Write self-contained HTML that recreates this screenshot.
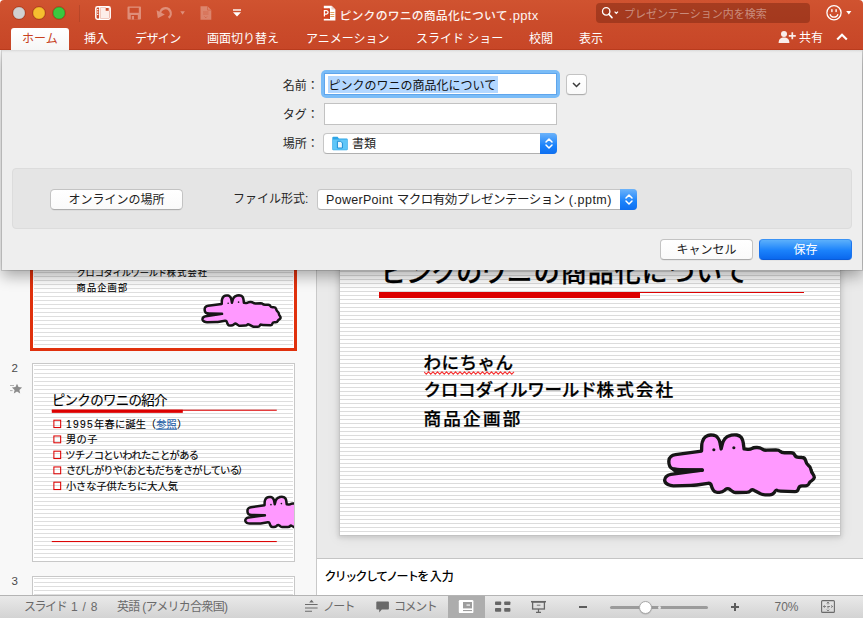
<!DOCTYPE html>
<html lang="ja">
<head>
<meta charset="utf-8">
<title>ピンクのワニの商品化について.pptx</title>
<style>
*{box-sizing:border-box;margin:0;padding:0}
html,body{width:863px;height:618px;overflow:hidden;background:#eaeaea}
body{position:relative;font-family:"Liberation Sans","Noto Sans CJK JP",sans-serif;font-size:12px;color:#222;-webkit-font-smoothing:antialiased}
.abs{position:absolute}
.t{position:absolute;white-space:nowrap;line-height:1}
/* ---------- title bar ---------- */
#titlebar{left:0;top:0;width:863px;height:50px;background:linear-gradient(#d05330 0,#cb4c2b 22px,#c74627 50px);border-radius:4px 4px 0 0;border-bottom:1px solid #b93b1d}
.tl{position:absolute;width:12px;height:12px;border-radius:50%;top:7px;outline:.5px solid rgba(130,35,10,.35)}
.tab{position:absolute;top:32.500px;color:#fff;white-space:nowrap;line-height:12px;font-size:12px}
#hometab{left:11px;top:28px;width:58px;height:22px;background:linear-gradient(#fff,#f6f6f6);border-radius:3px 3px 0 0}
/* ---------- workspace ---------- */
#leftpane{left:0;top:50px;width:316px;height:545px;background:#f8f8f8}
#divider{left:316px;top:50px;width:1px;height:545px;background:#c9c9c9}
#main{left:317px;top:50px;width:546px;height:508px;background:#eaeaea}
.stripes{background-color:#fff;background-image:repeating-linear-gradient(to bottom,transparent 0,transparent 3px,#dcdcdc 3px,#dcdcdc 4px)}
#slide{left:340px;top:160px;width:500px;height:375px;box-shadow:0 0 0 1px rgba(0,0,0,.04),0 1px 4px 2px rgba(0,0,0,.10),0 1px 12px 2px rgba(0,0,0,.07);background-position:0 0}
#notes{left:317px;top:558px;width:546px;height:37px;background:#fff;border-top:1px solid #c4c4c4}
/* ---------- status ---------- */
#status{left:0;top:595px;width:863px;height:23px;background:linear-gradient(#e9e9e9,#d3d3d3);border-top:1px solid #b4b4b4}
.st{position:absolute;white-space:nowrap;line-height:12px;font-size:12px;color:#6a6a6a;top:601px}
/* ---------- sheet ---------- */
#sheet{left:2px;top:50px;width:860px;height:220px;background:linear-gradient(#d9d9d9 0,#ebebeb 2px,#eee 3.500px);box-shadow:0 6px 14px rgba(0,0,0,.33),0 0 0 1px rgba(0,0,0,.12)}
#group{left:12px;top:168px;width:840px;height:61px;background:#e5e5e5;border:1px solid #dcdcdc;border-radius:4px}
.lbl{position:absolute;white-space:nowrap;line-height:13px;font-size:12px;color:#262626}
.field{position:absolute;background:#fff;border:1px solid #c2c2c2}
.btn{position:absolute;background:linear-gradient(#fff,#fafafa);border:1px solid #c3c3c3;border-bottom-color:#adadad;border-radius:4px;text-align:center;font-size:12px;color:#222;box-shadow:0 .5px 0 rgba(0,0,0,.08)}
.popup{position:absolute;background:#fff;border:1px solid #c6c6c6;border-bottom-color:#b0b0b0;border-radius:4px}
.step{position:absolute;background:linear-gradient(#6cb3fa,#1a82fb 60%,#0f6ff0);border-radius:0 4px 4px 0}

.sl{position:absolute;width:500px;height:375px;overflow:hidden;transform-origin:0 0;color:#000}
.sl .tt{position:absolute;white-space:nowrap;line-height:1;color:#000;font-weight:500;-webkit-text-stroke-width:.25px}
.thumb{position:absolute;width:263px;height:199px;border:1px solid #c8c8c8;overflow:hidden}
.tstripes{background-color:#fff;background-image:repeating-linear-gradient(to bottom,transparent 0,transparent 1px,#dedede 1px,#dedede 2px,transparent 2px,transparent 4px);box-shadow:inset 0 0 0 1px #fff}
.bar{position:absolute;background:#dc0000}
.bul{position:absolute;width:15.500px;height:15.500px;border:2.800px solid #dc0000}
.th .tt{margin-top:2px}
.thumb .sl .tt{font-weight:400;-webkit-text-stroke-width:.2px}
#slide svg{stroke-width:16px}
.thumb svg{stroke-width:23px}
.num{position:absolute;font-size:11.500px;line-height:11px;color:#4a4a4a;left:11.500px}
</style>
</head>
<body>

<!-- ================= workspace (behind sheet) ================= -->
<svg width="0" height="0" style="position:absolute"><defs><symbol id="croc" viewBox="0 0 863 432">
<path d="M250 240L144 238Q130 238 116 235L112 235Q98 232 94 221L94 221Q89 210 90 196L90 196Q91 182 100 175L100 175Q108 168 122 166L247 149L248 119Q249 105 256 93L256 92Q263 80 276 75L276 75Q288 70 302 73L305 73Q319 76 326 87L326 87Q334 98 336 112L341 139L347 115Q350 101 359 90L360 89Q369 78 383 75L389 73Q403 70 416 72L416 72Q430 74 438 84L438 84Q445 95 447 109L451 139L468 141Q482 142 488 137L488 137Q495 132 509 132L514 132Q528 132 536 138L536 138Q544 145 558 145L604 143Q618 143 624 150L624 150Q631 157 645 157L676 157Q690 157 694 168L694 168Q699 179 713 179L729 180Q743 180 746 194L747 196Q750 210 760 218L760 218Q771 226 772 238L772 238Q774 251 782 260L782 260Q789 269 788 277L788 277Q786 285 776 291L776 291Q765 297 762 306L762 306Q758 316 744 316L729 316Q715 316 712 330L712 330Q709 344 695 344L626 341Q612 341 609 338L609 338Q606 334 598 345L596 348Q588 359 574 359L552 359Q538 359 526 352L500 338Q488 331 482 339L482 339Q476 347 462 347L422 348Q408 348 402 346L402 346Q397 344 386 336L383 333Q372 325 361 334L358 337Q347 346 333 347L324 347Q310 348 304 338L304 338Q297 328 294 315L294 315Q291 302 277 304L224 312Q210 314 196 314L112 316Q98 316 85 310L85 309Q72 303 70 291L70 291Q69 279 78 271L78 271Q86 263 100 261L250 240Z" fill="#ff99ff" stroke="#161616" stroke-linejoin="round"/>
<path d="M250 241L140 244" stroke="#161616" stroke-width="17" stroke-linecap="round"/>
<path d="M165 236L100 236L120 256z" fill="#161616"/>
<circle cx="306" cy="143" r="7.500" fill="#161616"/><circle cx="402" cy="133" r="7.500" fill="#161616"/>
</symbol></defs></svg>
<div id="leftpane" class="abs"></div>
<div id="divider" class="abs"></div>
<div id="main" class="abs"></div>
<div id="slide" class="abs stripes"><div class="sl" id="s1main"><div class="tt" style="left:40.700px;top:101.200px;font-size:25.900px;letter-spacing:1.150px"><span style="letter-spacing:-.700px">ピンクのワ</span>ニの商品化について</div>
<div class="bar" style="left:38.500px;top:132px;width:261.500px;height:6.400px"></div>
<div class="bar" style="left:38.500px;top:132px;width:425px;height:1px"></div>
<div class="tt" style="left:83.500px;top:195px;font-size:17.600px;letter-spacing:.4px">わにちゃん</div>
<svg style="position:absolute;left:84px;top:210.500px;stroke-width:1px" width="92" height="4" viewBox="0 0 92 4"><polyline points="0,0.8 2.25,3.2 4.5,0.8 6.75,3.2 9,0.8 11.25,3.2 13.5,0.8 15.75,3.2 18,0.8 20.25,3.2 22.5,0.8 24.75,3.2 27,0.8 29.25,3.2 31.5,0.8 33.75,3.2 36,0.8 38.25,3.2 40.5,0.8 42.75,3.2 45,0.8 47.25,3.2 49.5,0.8 51.75,3.2 54,0.8 56.25,3.2 58.5,0.8 60.75,3.2 63,0.8 65.25,3.2 67.5,0.8 69.75,3.2 72,0.8 74.25,3.2 76.5,0.8 78.75,3.2 81,0.8 83.25,3.2 85.5,0.8 87.75,3.2 90,0.8" fill="none" stroke="#f53535" stroke-width="1.100"/></svg>
<div class="tt" style="left:83.500px;top:222.300px;font-size:17.600px;letter-spacing:2.100px"><span style="letter-spacing:-.300px">クロコダイルワールド</span>株式会社</div>
<div class="tt" style="left:83.500px;top:250.700px;font-size:17.600px;letter-spacing:2.200px">商品企画部</div>
<svg style="position:absolute;left:310px;top:260px" width="180" height="90"><use href="#croc"/></svg>
</div></div>
<div id="notes" class="abs"></div>
<div class="t" id="notetx" style="left:324.500px;top:571.300px;font-size:12px;line-height:13px;color:#000;font-weight:500;letter-spacing:-1.650px">クリックしてノートを<span style="letter-spacing:0;margin-left:2px">入力</span></div>
<!-- thumbnails -->
<div class="abs" id="selring" style="left:30px;top:148px;width:267px;height:203px;background:#e0310d"></div>
<div class="thumb tstripes" id="th1" style="left:32px;top:150px;border-color:#e0310d"><div class="sl th" style="transform:scale(.522,.5253)"><div class="tt" style="left:40.700px;top:101.200px;font-size:25.900px;letter-spacing:1.150px"><span style="letter-spacing:-.700px">ピンクのワ</span>ニの商品化について</div>
<div class="bar" style="left:38.500px;top:132px;width:261.500px;height:6.400px"></div>
<div class="bar" style="left:38.500px;top:132px;width:425px;height:1px"></div>
<div class="tt" style="left:83.500px;top:195px;font-size:17.600px;letter-spacing:.4px">わにちゃん</div>
<svg style="position:absolute;left:84px;top:210.500px;stroke-width:1px" width="92" height="4" viewBox="0 0 92 4"><polyline points="0,0.8 2.25,3.2 4.5,0.8 6.75,3.2 9,0.8 11.25,3.2 13.5,0.8 15.75,3.2 18,0.8 20.25,3.2 22.5,0.8 24.75,3.2 27,0.8 29.25,3.2 31.5,0.8 33.75,3.2 36,0.8 38.25,3.2 40.5,0.8 42.75,3.2 45,0.8 47.25,3.2 49.5,0.8 51.75,3.2 54,0.8 56.25,3.2 58.5,0.8 60.75,3.2 63,0.8 65.25,3.2 67.5,0.8 69.75,3.2 72,0.8 74.25,3.2 76.5,0.8 78.75,3.2 81,0.8 83.25,3.2 85.5,0.8 87.75,3.2 90,0.8" fill="none" stroke="#f53535" stroke-width="1.100"/></svg>
<div class="tt" style="left:83.500px;top:222px;font-size:17.600px;letter-spacing:2.100px"><span style="letter-spacing:-.300px">クロコダイルワールド</span>株式会社</div>
<div class="tt" style="left:83.500px;top:250.700px;font-size:17.600px;letter-spacing:2.200px">商品企画部</div>
<svg style="position:absolute;left:310px;top:260px" width="180" height="90"><use href="#croc"/></svg>
</div></div>
<div class="num" id="n2" style="top:363px">2</div>
<svg class="abs" style="left:8px;top:383px" width="15" height="12" viewBox="0 0 15 12"><path d="M9 .8l1.500 3.300 3.600.4-2.700 2.400.8 3.600-3.200-1.900-3.200 1.900.8-3.600-2.700-2.400 3.600-.4z" fill="#8b8b8b"/><path d="M2 2.500h4M2 7.600h2.600" stroke="#a8a8a8" stroke-width=".9"/></svg>
<div class="thumb tstripes" id="th2" style="left:32px;top:363px"><div class="sl" style="transform:scale(.522,.5253)"><div class="tt" style="left:36px;top:56.6px;font-size:25.900px;letter-spacing:-1.400px">ピンクのワニの紹介</div>
<div class="bar" style="left:36px;top:87.4px;width:251px;height:6px"></div>
<div class="bar" style="left:36px;top:87.4px;width:431px;height:1.500px"></div>
<div class="bul" style="left:38.500px;top:106.3px"></div><div class="tt" id="b1" style="left:63px;top:105.3px;font-size:19.600px;letter-spacing:.4px"><span style="letter-spacing:2.600px">1995</span>年春に誕生<span style="margin-left:-1px">（</span><span style="color:#1f5fa8;text-decoration:underline;text-decoration-thickness:2px;text-underline-offset:2px">参照</span><span style="margin-left:0px">）</span></div>
<div class="bul" style="left:38.500px;top:135.6px"></div><div class="tt" id="b2" style="left:63px;top:134.6px;font-size:19.600px;letter-spacing:.8px">男の子</div>
<div class="bul" style="left:38.500px;top:165.0px"></div><div class="tt" id="b3" style="left:62px;top:164.0px;font-size:19.600px;letter-spacing:-1.300px">ツチノコといわれたことがある</div>
<div class="bul" style="left:38.500px;top:194.8px"></div><div class="tt" id="b4" style="left:63px;top:193.8px;font-size:19.600px;letter-spacing:-1.650px">さびしがりや<span style="margin-left:-10px;margin-right:1px">（</span>おともだちをさがしている<span style="margin-left:-2px">）</span></div>
<div class="bul" style="left:38.500px;top:224.1px"></div><div class="tt" id="b5" style="left:63px;top:223.1px;font-size:19.600px;letter-spacing:-.100px">小さな子供たちに大人気</div>
<svg style="position:absolute;left:392px;top:238.2px" width="180" height="90"><use href="#croc"/></svg>
<div class="bar" style="left:36px;top:336.500px;width:431px;height:2.200px"></div>
</div></div>
<div class="num" id="n3" style="top:576px">3</div>
<div class="thumb tstripes" id="th3" style="left:32px;top:576px"></div>

<!-- ================= status bar ================= -->
<div id="status" class="abs"></div>
<div class="st" id="st1" style="left:24px;word-spacing:1.500px"><span style="letter-spacing:-1.450px">スライド</span> 1 / 8</div>
<div class="st" id="st2" style="left:117px;letter-spacing:-.700px">英語 (アメリカ合衆国)</div>
<svg class="abs" style="left:305px;top:599px" width="14" height="14" viewBox="0 0 14 14"><path d="M6.500 .8l2.300 2.600h-4.600z" fill="#6c6c6c"/><path d="M0 5.500h12.600M0 9h12.600M0 12.200h7" stroke="#6c6c6c" stroke-width="1.100"/></svg>
<div class="st" id="st3" style="left:323px;letter-spacing:-1.800px">ノート</div>
<svg class="abs" style="left:376px;top:601px" width="14" height="12" viewBox="0 0 14 12"><path d="M.3 1.300a.8.8 0 0 1 .8-.8h11a.8.8 0 0 1 .8.8v6.400a.8.800 0 0 1-.8.800h-6.300l-2.600 3v-3h-2.100a.8.800 0 0 1-.8-.8z" fill="#696969"/></svg>
<div class="st" id="st4" style="left:394px;letter-spacing:-1.400px">コメント</div>
<div class="abs" id="viewact" style="left:448px;top:596px;width:37px;height:22px;background:#adadad"></div>
<svg class="abs" style="left:458px;top:599px" width="16" height="15" viewBox="0 0 16 15"><rect x=".8" y="1" width="14.600" height="13.100" rx="1.200" fill="#fff"/><rect x="5" y="3" width="9" height="6.400" fill="#9d9d9d"/><rect x="8.500" y="5.500" width="3.500" height="1.100" fill="#fff"/><rect x="5" y="11" width="9" height="1.100" fill="#9d9d9d"/></svg>
<svg class="abs" style="left:495px;top:601px" width="16" height="12" viewBox="0 0 16 12"><rect x="0" y=".5" width="6.200" height="3.500" rx=".8" fill="#666"/><rect x="9.200" y=".5" width="6.200" height="3.500" rx=".8" fill="#666"/><rect x="0" y="7" width="6.200" height="3.700" rx=".8" fill="#666"/><rect x="9.200" y="7" width="6.200" height="3.700" rx=".8" fill="#666"/></svg>
<svg class="abs" style="left:530px;top:600px" width="17" height="14" viewBox="0 0 17 14"><path d="M1 1.700h15" stroke="#666" stroke-width="1.500"/><rect x="2.600" y="2" width="11.800" height="7" fill="none" stroke="#666" stroke-width="1.300"/><path d="M6.800 5.200h3.600" stroke="#777" stroke-width="1"/><path d="M8.500 9v3.200M6 12.300h5" stroke="#666" stroke-width="1.200"/></svg>
<div class="abs" style="left:579px;top:606px;width:8px;height:2px;background:#5c5c5c"></div>
<div class="abs" style="left:610px;top:605.500px;width:98px;height:3px;border-radius:1.500px;background:#9b9b9b"></div>
<div class="abs" style="left:657.500px;top:605.500px;width:3px;height:3px;border-radius:50%;background:#e6e6e6"></div>
<div class="abs" style="left:638.500px;top:600.500px;width:13px;height:13px;border-radius:50%;background:#fff;border:1px solid #a9a9a9;box-shadow:0 .5px 1px rgba(0,0,0,.2)"></div>
<div class="abs" style="left:731px;top:606px;width:8px;height:2px;background:#5c5c5c"></div>
<div class="abs" style="left:734px;top:603px;width:2px;height:8px;background:#5c5c5c"></div>
<div class="st" id="st5" style="left:774.500px">70%</div>
<svg class="abs" style="left:821px;top:600px" width="14" height="13" viewBox="0 0 14 13"><rect x=".6" y=".6" width="12.800" height="11.800" rx="1" fill="none" stroke="#6a6a6a" stroke-width="1.100"/><path d="M7 2v9M2.500 6.500h9" stroke="#6a6a6a" stroke-width=".8" stroke-dasharray="2.500 1.500"/><path d="M5.800 3.400l1.200-1.300 1.200 1.300M5.800 9.600l1.200 1.300 1.200-1.300M3.700 5.300l-1.300 1.200 1.300 1.200M10.300 5.300l1.300 1.200-1.300 1.200" fill="none" stroke="#6a6a6a" stroke-width=".8"/></svg>

<!-- ================= save sheet ================= -->
<div id="sheet" class="abs"></div>
<div id="group" class="abs"></div>
<div class="lbl" id="l1" style="left:282.700px;top:79.500px">名前：</div>
<div class="lbl" id="l2" style="left:282.700px;top:108.500px">タグ：</div>
<div class="lbl" id="l3" style="left:282.700px;top:137.500px">場所：</div>
<!-- name field with focus ring -->
<div class="abs" id="ring" style="left:321px;top:70px;width:239px;height:28px;border-radius:5px;background:#7abcf7"></div>
<div class="abs" id="namef" style="left:324px;top:73px;width:233px;height:22px;background:#fff;border:1px solid #5fa5ec"></div>
<div class="abs" id="sel" style="left:327.500px;top:75.500px;width:170px;height:17px;background:#b3d7ff"></div>
<div class="t" id="nametx" style="left:328.500px;top:80px;font-size:12px;line-height:13px;color:#111">ピンクのワニの商品化について</div>
<!-- expand button -->
<div class="btn" id="expbtn" style="left:566px;top:74px;width:21px;height:21px"></div>
<svg class="abs" style="left:571px;top:81px" width="11" height="8" viewBox="0 0 11 8"><path d="M2 2l3.500 3.500 3.500-3.500" fill="none" stroke="#3a3a3a" stroke-width="1.500"/></svg>
<!-- tag field -->
<div class="field" id="tagf" style="left:324px;top:103px;width:233px;height:22px"></div>
<!-- place popup -->
<div class="popup" id="placep" style="left:323px;top:133px;width:234px;height:21px"></div>
<div class="step" id="step1" style="left:540px;top:133px;width:17px;height:21px"></div>
<svg class="abs" style="left:543.500px;top:137px" width="10" height="13" viewBox="0 0 10 13"><path d="M2 5l3-3 3 3M2 8l3 3 3-3" fill="none" stroke="#fff" stroke-width="1.500" stroke-linecap="round" stroke-linejoin="round"/></svg>
<svg class="abs" style="left:332px;top:135.500px" width="16" height="15" viewBox="0 0 16 15">
  <path d="M.3 1.800a1.100 1.100 0 0 1 1.100-1.100h4.200l1.300 1.700h7.700a1.100 1.100 0 0 1 1.100 1.100v9.700a1.100 1.100 0 0 1-1.100 1.100h-13.200a1.100 1.100 0 0 1-1.100-1.100z" fill="#2ea5e6"/>
  <path d="M.8 3.400h14.400v9.600a.7.700 0 0 1-.7.700h-13a.7.700 0 0 1-.7-.7z" fill="#5fc6f8"/>
  <path d="M5.400 5.300h3.300l1.700 1.700v5h-5z" fill="#e8f7ff" stroke="#1c8fd6" stroke-width="1"/>
</svg>
<div class="t" id="placetx" style="left:352px;top:137.500px;font-size:12px;line-height:13px;color:#222">書類</div>
<!-- group row -->
<div class="btn" id="onlbtn" style="left:50px;top:189px;width:133px;height:21px;line-height:20.500px;border-radius:4.500px">オンラインの場所</div>
<div class="lbl" id="l4" style="left:233px;top:193px">ファイル形式:</div>
<div class="popup" id="fmtp" style="left:317px;top:189px;width:320px;height:21px"></div>
<div class="step" id="step2" style="left:620px;top:189px;width:17px;height:21px"></div>
<svg class="abs" style="left:623.500px;top:193px" width="10" height="13" viewBox="0 0 10 13"><path d="M2 5l3-3 3 3M2 8l3 3 3-3" fill="none" stroke="#fff" stroke-width="1.500" stroke-linecap="round" stroke-linejoin="round"/></svg>
<div class="t" id="fmttx" style="left:326px;top:192.500px;font-size:12.500px;line-height:14px;color:#222;letter-spacing:-.470px"><span style="letter-spacing:.3px">PowerPoint </span>マクロ有効プレゼンテーション<span style="letter-spacing:.5px"> (.pptm)</span></div>
<!-- buttons -->
<div class="btn" id="cancel" style="left:660px;top:239px;width:93px;height:21px;line-height:20px">キャンセル</div>
<div class="btn" id="save" style="left:759px;top:239px;width:93px;height:21px;line-height:20px;color:#fff;background:linear-gradient(#5cb0fb,#1b82fb 55%,#0a68ee);border-color:#3b93f5 #1b74ee #0a5bd8">保存</div>

<!-- ================= title bar ================= -->
<div class="abs" style="left:0;top:0;width:863px;height:6px;background:#fff"></div>
<div id="titlebar" class="abs"></div>
<div class="tl" style="left:13px;background:#d1d1d1;box-shadow:inset 0 0 0 .5px #b9b4b3"></div>
<div class="tl" style="left:33px;background:#f6be2f;box-shadow:inset 0 0 0 .5px #d9a021"></div>
<div class="tl" style="left:53px;background:#3bc83f;box-shadow:inset 0 0 0 .5px #2aa62c"></div>
<div class="abs" style="left:79px;top:5px;width:1px;height:17px;background:rgba(0,0,0,.10)"></div>
<!-- quick access icons -->
<svg class="abs" style="left:95px;top:6px" width="16" height="14" viewBox="0 0 16 14">
  <rect x=".8" y=".8" width="14.4" height="12.4" rx="1.6" fill="none" stroke="#fff" stroke-width="1.5"/>
  <rect x="4.100" y="1" width="1.300" height="12" fill="#fff"/>
  <path d="M5.400 1.500h5.300v3.300h3.500v7.700h-8.800z" fill="#fdeee9"/>
  <path d="M10.700 1.500h3.500v3.300" fill="none" stroke="#fff" stroke-width=".9"/>
  <rect x="2.100" y="3" width="1.200" height="1.200" fill="#fff"/><rect x="2.100" y="5.400" width="1.200" height="1.200" fill="#fff"/><rect x="2.100" y="7.800" width="1.200" height="1.200" fill="#fff"/>
</svg>
<svg class="abs" style="left:127px;top:6px;opacity:.36" width="15" height="14" viewBox="0 0 15 14">
  <path d="M.5 1.500a1 1 0 0 1 1-1h11.500a1 1 0 0 1 1 1v11a1 1 0 0 1-1 1h-11.500a1 1 0 0 1-1-1z" fill="#fff"/>
  <rect x="2.600" y="1.800" width="9.200" height="5" fill="#cb4a29"/>
  <rect x="3.800" y="9" width="7" height="4.500" fill="#cb4a29"/><rect x="4.800" y="10" width="2.200" height="3.500" fill="#fff"/>
</svg>
<svg class="abs" style="left:156px;top:6px;opacity:.36" width="32" height="15" viewBox="0 0 32 15">
  <path d="M4.500 9.200 A5.300 5.300 0 1 1 12.600 11.800" fill="none" stroke="#fff" stroke-width="2.300"/>
  <path d="M.6 4.300 L1.800 12.200 L8.800 8.600z" fill="#fff"/>
  <path d="M24.300 5.200h4.600l-2.300 3.500z" fill="#fff"/>
</svg>
<svg class="abs" style="left:200px;top:6px;opacity:.3" width="12" height="14" viewBox="0 0 12 14">
  <path d="M.5 .3h7l3.800 3.800v9.600h-10.800z" fill="#fff"/>
  <path d="M7.500 .3v3.800h3.800" fill="none" stroke="#cb4a29" stroke-width=".8" opacity=".6"/>
  <path d="M3 6h5.500M3 8h5.500M4.500 10.500l1.300 1.300 1.300-1.300" stroke="#cb4a29" stroke-width=".9" fill="none" opacity=".55"/>
</svg>
<svg class="abs" style="left:232px;top:9px" width="10" height="8" viewBox="0 0 10 8">
  <rect x="1" y=".3" width="8" height="1.4" fill="#fff"/><path d="M1 3.2h8l-4 4.3z" fill="#fff"/>
</svg>
<!-- document icon + title -->
<svg class="abs" style="left:322px;top:5px" width="14" height="16" viewBox="0 0 14 16">
  <path d="M1.800 .700h7.700l3.900 3.900v10.800h-11.600z" fill="#fff"/>
  <path d="M9.500 .700v3.900h3.900z" fill="#e9d3cb"/>
  <rect x="8.300" y="7" width="4" height="1" fill="#e0a25e"/><rect x="8.300" y="9" width="4" height="1" fill="#e0a25e"/><rect x="8.300" y="11" width="4" height="1" fill="#e0a25e"/>
  <rect x="6.600" y="3.400" width="1.300" height="10.600" fill="#a8341a"/>
  <rect x=".2" y="3.300" width="6.900" height="10.500" fill="#d4411e"/>
  <path d="M2.400 11.600v-6h1.900a1.750 1.750 0 0 1 0 3.500h-1.900" fill="none" stroke="#fff" stroke-width="1.300"/>
</svg>
<div class="t" id="wtitle" style="left:339.500px;top:9px;font-size:11.850px;line-height:13px;color:#fdf3f0;font-weight:500;letter-spacing:.2px">ピンクのワニの商品化について<span style="font-size:13px;margin-left:1px;letter-spacing:.3px">.pptx</span></div>
<!-- search -->
<div class="abs" style="left:596px;top:3px;width:214px;height:20px;border-radius:4px;background:rgba(110,30,12,.42)"></div>
<svg class="abs" style="left:601px;top:6px" width="20" height="14" viewBox="0 0 20 14">
  <circle cx="5.2" cy="5.4" r="3.7" fill="none" stroke="#fff" stroke-width="1.3"/>
  <path d="M7.9 8.2l3.1 3.4" stroke="#fff" stroke-width="1.6" stroke-linecap="round"/>
  <path d="M13.6 5.6l1.7 1.7 1.7-1.7" fill="none" stroke="#fff" stroke-width="1.2"/>
</svg>
<div class="t" id="srch" style="left:624px;top:7.5px;font-size:11px;line-height:12px;color:rgba(255,255,255,.42)">プレゼンテーション内を検索</div>
<!-- smiley -->
<svg class="abs" style="left:825px;top:4px" width="32" height="18" viewBox="0 0 32 18">
  <circle cx="9" cy="8.7" r="7.1" fill="none" stroke="#fff" stroke-width="1.3"/>
  <rect x="6.2" y="5" width="1.4" height="3.2" rx=".7" fill="#fff"/><rect x="10.4" y="5" width="1.4" height="3.2" rx=".7" fill="#fff"/>
  <path d="M5 10.2a4.2 4.2 0 0 0 8 0" fill="none" stroke="#fff" stroke-width="1.2"/>
  <path d="M21.200 7h5.200l-2.600 3.600z" fill="#fff"/>
</svg>
<!-- tabs -->
<div id="hometab" class="abs"></div>
<div class="tab" id="tb0" style="left:22px;color:#c8421f">ホーム</div>
<div class="tab" id="tb1" style="left:84px">挿入</div>
<div class="tab" id="tb2" style="left:135px;letter-spacing:-.600px">デザイン</div>
<div class="tab" id="tb3" style="left:207px">画面切り替え</div>
<div class="tab" id="tb4" style="left:306px">アニメーション</div>
<div class="tab" id="tb5" style="left:416px">スライド ショー</div>
<div class="tab" id="tb6" style="left:529px">校閲</div>
<div class="tab" id="tb7" style="left:579px">表示</div>
<svg class="abs" style="left:777.500px;top:30px;opacity:.9" width="19" height="14" viewBox="0 0 19 14">
  <circle cx="6" cy="4" r="3" fill="#fff"/><path d="M.6 13c0-4 2.2-5.6 5.4-5.6s5.4 1.600 5.400 5.600z" fill="#fff"/>
  <path d="M14.300 2.300v7M10.800 5.800h7" stroke="#fff" stroke-width="1.700"/>
</svg>
<div class="tab" id="tb8" style="left:799px;top:31.500px">共有</div>
<svg class="abs" style="left:835.500px;top:33px" width="12" height="8" viewBox="0 0 12 8"><path d="M1.200 6.500l4.800-4.800 4.800 4.800" fill="none" stroke="#fff" stroke-width="2.100"/></svg>

</body>
</html>
